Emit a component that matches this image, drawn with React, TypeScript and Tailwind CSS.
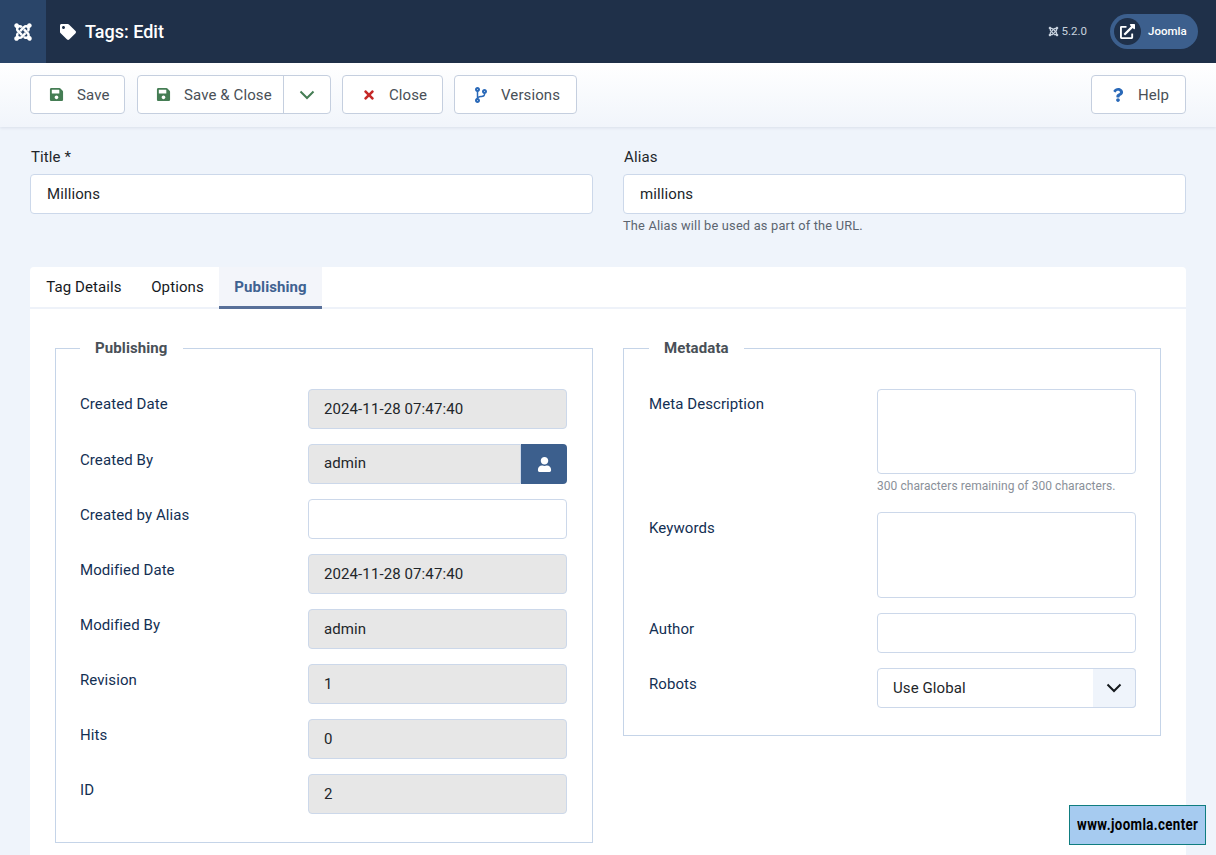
import { FaJoomla, FaTag, FaSave, FaTimes, FaCodeBranch, FaQuestion, FaUser, FaExternalLinkAlt } from 'react-icons/fa';

function Chevron({ className }: { className?: string }) {
  return (
    <svg viewBox="0 0 16 10" fill="none" stroke="currentColor" strokeWidth="2" className={className}>
      <path d="M1.5 1.5l6.5 6.5 6.5-6.5" />
    </svg>
  );
}

function ToolButton({ icon, label, width }: { icon: React.ReactNode; label: string; width: string }) {
  return (
    <button className={`${width} h-[39px] bg-white border border-[#c5cfdf] rounded-[4px] flex items-center pl-[17px] text-[#495057] text-[15px] tracking-[0.1px]`}>
      <span className="w-[17px] flex justify-center">{icon}</span>
      <span className="ml-[12px] pt-[1px]">{label}</span>
    </button>
  );
}

function Input({ value, readOnly, className = '' }: { value?: string; readOnly?: boolean; className?: string }) {
  return (
    <div className={`h-[40px] border border-[#ccd8ea] rounded-[4px] pr-[15px] flex items-center text-[15px] text-[#22262a] tracking-[0.1px] ${readOnly ? 'bg-[#e7e7e7]' : 'bg-white'} ${className || 'pl-[15px]'}`}>
      {value}
    </div>
  );
}

function Row({ label, children, gap = 'mb-[15px]', pad = 'pt-[6px]' }: { label: string; children: React.ReactNode; gap?: string; pad?: string }) {
  return (
    <div className={`flex ${gap}`}>
      <div className={`w-[228px] shrink-0 ${pad} text-[15px] leading-[20px] text-[#132f53] tracking-[0.08px]`}>{label}</div>
      <div className="w-[259px]">{children}</div>
    </div>
  );
}

function Fieldset({ legend, children, className = '' }: { legend: string; children: React.ReactNode; className?: string }) {
  return (
    <fieldset className={`w-[538px] border border-[#c5d4e8] pr-[24px] pt-[29px] ${className}`}>
      <legend className="px-[15px] h-[24px] leading-[24px] text-[15px] font-bold text-[#495057] tracking-[0.1px]">{legend}</legend>
      {children}
    </fieldset>
  );
}

export default function App() {
  return (
    <div className="relative h-[855px] overflow-hidden bg-[#eff4fb] font-[family-name:Roboto,sans-serif]">
      <header className="h-[63px] bg-[#1f3049] flex items-center text-white">
        <div className="w-[46px] h-full bg-[#2a4569] flex items-center justify-center">
          <FaJoomla className="w-[20px] h-[20px]" />
        </div>
        <FaTag className="ml-[14px] w-[16px] h-[16px]" />
        <h1 className="ml-[9px] text-[18px] font-medium">Tags: Edit</h1>
        <div className="ml-auto flex items-center text-[#c8d2df] text-[11.5px]">
          <FaJoomla className="w-[11px] h-[11px] mr-[3px]" />
          5.2.0
        </div>
        <div className="ml-[23px] mr-[18px] w-[88px] h-[35px] rounded-full bg-[#3c5f8d] flex items-center pl-[4px]">
          <div className="w-[27px] h-[27px] rounded-full bg-[#1f3049] flex items-center justify-center">
            <FaExternalLinkAlt className="w-[15px] h-[15px]" />
          </div>
          <span className="ml-[7px] text-[11.5px] font-medium">Joomla</span>
        </div>
      </header>

      <div className="h-[64px] bg-gradient-to-b from-white to-[#f1f5fb] shadow-[0_1px_3px_rgba(30,50,90,0.1)] flex items-center px-[30px] pb-[1px]">
        <ToolButton width="w-[95px]" label="Save" icon={<FaSave className="w-[15px] h-[15px] text-[#457d54]" />} />
        <div className="ml-[12px] flex w-[194px] h-[39px] bg-white border border-[#c5cfdf] rounded-[4px] text-[#495057] text-[15px] tracking-[0.1px]">
          <div className="w-[146px] flex items-center pl-[17px] border-r border-[#c5cfdf]">
            <span className="w-[17px] flex justify-center"><FaSave className="w-[15px] h-[15px] text-[#457d54]" /></span>
            <span className="ml-[12px] pt-[1px]">Save &amp; Close</span>
          </div>
          <div className="flex-1 flex items-center justify-center">
            <Chevron className="w-[16px] h-[10px] text-[#457d54]" />
          </div>
        </div>
        <div className="ml-[11px]">
          <ToolButton width="w-[101px]" label="Close" icon={<FaTimes className="w-[14px] h-[14px] text-[#c52827]" />} />
        </div>
        <div className="ml-[11px]">
          <ToolButton width="w-[123px]" label="Versions" icon={<FaCodeBranch className="w-[16px] h-[16px] text-[#2a69b8]" />} />
        </div>
        <div className="ml-auto">
          <ToolButton width="w-[95px]" label="Help" icon={<FaQuestion className="w-[14px] h-[14px] text-[#2a69b8]" />} />
        </div>
      </div>

      <main className="px-[30px] pt-[20px]">
        <div className="grid grid-cols-[563px_563px] gap-[30px]">
          <div>
            <label className="block h-[27px] pl-[1px] text-[15px] leading-[20px] text-[#22262a] tracking-[0.1px]">Title *</label>
            <Input value="Millions" className="pl-[16px]" />
          </div>
          <div>
            <label className="block h-[27px] pl-[1px] text-[15px] leading-[20px] text-[#22262a] tracking-[0.1px]">Alias</label>
            <Input value="millions" className="pl-[16px]" />
            <p className="mt-[3px] text-[12.8px] leading-[17px] text-[#5c6570] tracking-[0.2px]">The Alias will be used as part of the URL.</p>
          </div>
        </div>

        <section className="mt-[33px] bg-white rounded-t-[4px] h-[600px]">
          <nav className="h-[42px] border-b-2 border-[#eef2f9] flex text-[15px] tracking-[0.1px] text-[#15191d]">
            <div className="w-[106px] h-[42px] pb-[2px] pl-[2px] flex items-center justify-center">Tag Details</div>
            <div className="w-[83px] h-[42px] pb-[2px] flex items-center justify-center">Options</div>
            <div className="w-[103px] h-[42px] pb-[2px] flex items-center justify-center font-bold text-[#3f6291] bg-[#f3f5fa] shadow-[inset_0_-3px_0_#587099]">Publishing</div>
          </nav>
          <div className="flex justify-between px-[25px] pt-[27px]">
            <Fieldset legend="Publishing" className="h-[507px] pl-[24px]">
              <Row label="Created Date" pad="pt-[5px]"><Input readOnly value="2024-11-28 07:47:40" /></Row>
              <Row label="Created By">
                <div className="flex h-[40px]">
                  <Input readOnly value="admin" className="pl-[15px] pb-[2px] flex-1 rounded-r-none" />
                  <div className="w-[46px] bg-[#3c5f8d] rounded-r-[4px] flex items-center justify-center text-white">
                    <FaUser className="w-[15px] h-[15px]" />
                  </div>
                </div>
              </Row>
              <Row label="Created by Alias"><Input /></Row>
              <Row label="Modified Date"><Input readOnly value="2024-11-28 07:47:40" /></Row>
              <Row label="Modified By"><Input readOnly value="admin" /></Row>
              <Row label="Revision"><Input readOnly value="1" /></Row>
              <Row label="Hits"><Input readOnly value="0" /></Row>
              <Row label="ID" gap=""><Input readOnly value="2" /></Row>
            </Fieldset>
            <Fieldset legend="Metadata" className="h-[400px] pl-[25px]">
              <Row label="Meta Description" gap="mb-[18px]" pad="pt-[5px]">
                <div className="h-[85px] bg-white border border-[#ccd8ea] rounded-[4px]" />
                <p className="mt-[4px] text-[12px] leading-[16px] text-[#8a9099] tracking-[0.06px]">300 characters remaining of 300 characters.</p>
              </Row>
              <Row label="Keywords">
                <div className="h-[86px] bg-white border border-[#ccd8ea] rounded-[4px]" />
              </Row>
              <Row label="Author"><Input /></Row>
              <Row label="Robots" gap="">
                <div className="relative">
                  <Input value="Use Global" />
                  <div className="absolute right-0 top-0 w-[43px] h-[40px] bg-[#eff4fb] border border-l-0 border-[#ccd8ea] rounded-r-[4px] flex items-center justify-center text-[#15191d]">
                    <Chevron className="w-[16px] h-[10px]" />
                  </div>
                </div>
              </Row>
            </Fieldset>
          </div>
        </section>
      </main>

      <div className="absolute left-[1069px] top-[805px] w-[137px] h-[40px] bg-[#a6cbf0] border border-[#0f7d80] flex items-center justify-center font-bold text-[17px] text-black">
        <span className="inline-block whitespace-nowrap tracking-[0.5px] scale-x-[0.78]">www.joomla.center</span>
      </div>
    </div>
  );
}
